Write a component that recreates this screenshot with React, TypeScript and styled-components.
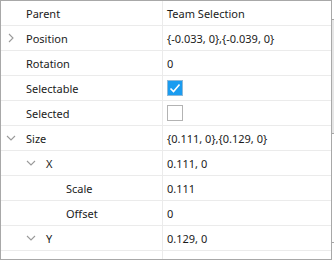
import styled, { createGlobalStyle } from 'styled-components'

type Prop = {
  name: string
  depth: number
  toggle?: 'open' | 'closed'
  value?: string
  check?: boolean
}

const props: Prop[] = [
  { name: 'Parent', depth: 0, value: 'Team Selection' },
  { name: 'Position', depth: 0, toggle: 'closed', value: '{-0.033, 0},{-0.039, 0}' },
  { name: 'Rotation', depth: 0, value: '0' },
  { name: 'Selectable', depth: 0, check: true },
  { name: 'Selected', depth: 0, check: false },
  { name: 'Size', depth: 0, toggle: 'open', value: '{0.111, 0},{0.129, 0}' },
  { name: 'X', depth: 1, toggle: 'open', value: '0.111, 0' },
  { name: 'Scale', depth: 2, value: '0.111' },
  { name: 'Offset', depth: 2, value: '0' },
  { name: 'Y', depth: 1, toggle: 'open', value: '0.129, 0' },
  { name: '', depth: 2, value: '' },
]

const Chevron = ({ open }: { open: boolean }) => (
  <svg width="10" height="10" viewBox="0 0 10 10">
    <polyline
      points={open ? '1,3 5,7 9,3' : '3,1 7,5 3,9'}
      fill="none"
      stroke="#9a9a9a"
      strokeWidth="1.1"
    />
  </svg>
)

const CheckBox = ({ checked }: { checked: boolean }) => (
  <Box $checked={checked}>
    {checked && (
      <svg width="14" height="14" viewBox="0 0 14 14">
        <polyline points="2.5,7.5 5.5,10.5 11.5,3.5" fill="none" stroke="#ffffff" strokeWidth="1.6" />
      </svg>
    )}
  </Box>
)

const App = () => (
  <>
    <GlobalStyle />
    <Frame>
      <Panel>
        {props.map((p, i) => (
          <Row key={i}>
            <NameCell $depth={p.depth}>
              {p.toggle && (
                <Toggle $depth={p.depth}>
                  <Chevron open={p.toggle === 'open'} />
                </Toggle>
              )}
              {p.name}
            </NameCell>
            <ValueCell>
              {p.check !== undefined ? <CheckBox checked={p.check} /> : p.value}
            </ValueCell>
          </Row>
        ))}
      </Panel>
      <ScrollTrack>
        <Thumb />
      </ScrollTrack>
    </Frame>
  </>
)

const GlobalStyle = createGlobalStyle`
  body {
    margin: 0;
    background: #ffffff;
    font-family: "Noto Sans", "Open Sans", sans-serif;
  }
`

const Frame = styled.div`
  display: flex;
  width: 334px;
  height: 262px;
  overflow: hidden;
`

const Panel = styled.div`
  width: 332px;
  height: 260px;
  box-sizing: border-box;
  border: 1px solid #a8a8a8;
  overflow: hidden;
`

const Row = styled.div`
  display: grid;
  grid-template-columns: 162px 1fr;
  height: 25px;
  box-sizing: border-box;
  border-bottom: 1px solid #ebebeb;
`

const NameCell = styled.div<{ $depth: number }>`
  position: relative;
  display: flex;
  align-items: center;
  padding-left: ${(p) => 25 + p.$depth * 20}px;
  border-right: 1px solid #ebebeb;
  font-size: 11px;
  color: #1b1b1b;
`

const Toggle = styled.span<{ $depth: number }>`
  position: absolute;
  left: ${(p) => 5 + p.$depth * 20}px;
  top: 7px;
  display: flex;
`

const ValueCell = styled.div`
  display: flex;
  align-items: center;
  padding-left: 4px;
  font-size: 11px;
  color: #1b1b1b;
  white-space: nowrap;
`

const Box = styled.span<{ $checked: boolean }>`
  display: flex;
  align-items: center;
  justify-content: center;
  width: 16px;
  height: 16px;
  box-sizing: border-box;
  border: 1px solid ${(p) => (p.$checked ? '#8fb9d8' : '#b3b3b3')};
  background: ${(p) => (p.$checked ? '#1a9cf0' : '#ffffff')};
`

const ScrollTrack = styled.div`
  width: 2px;
  height: 243px;
  padding-top: 19px;
  box-sizing: border-box;
  border-bottom: 1px solid #a8a8a8;
`

const Thumb = styled.div`
  height: 113px;
  background: #e6e6e6;
  border-top: 1px solid #a8a8a8;
  border-bottom: 1px solid #a8a8a8;
`

export default App
